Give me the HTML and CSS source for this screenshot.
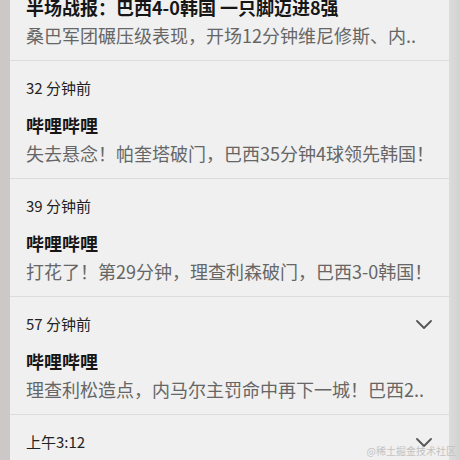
FILE: index.html
```html
<!DOCTYPE html>
<html lang="zh-CN">
<head>
    <meta charset="UTF-8">
    <meta name="viewport" content="width=device-width, initial-scale=1.0">
    <title>通知</title>
    <link rel="stylesheet" href="styles.css">
</head>
<body>
    <div class="screen">
        <div class="edge-left"></div>
        <main class="panel">
            <div class="notice-list">
                <div class="notice first">
                    <div class="notice-title">半场战报：巴西4-0韩国 一只脚迈进8强</div>
                    <div class="notice-body">桑巴军团碾压级表现，开场12分钟维尼修斯、内..</div>
                </div>
                <div class="notice">
                    <div class="notice-time">32 分钟前</div>
                    <div class="notice-title">哔哩哔哩</div>
                    <div class="notice-body">失去悬念！帕奎塔破门，巴西35分钟4球领先韩国！</div>
                </div>
                <div class="notice">
                    <div class="notice-time">39 分钟前</div>
                    <div class="notice-title">哔哩哔哩</div>
                    <div class="notice-body">打花了！第29分钟，理查利森破门，巴西3-0韩国！</div>
                </div>
                <div class="notice">
                    <div class="notice-time">57 分钟前
                        <svg class="chevron" width="16" height="9" viewBox="0 0 16 9"><polyline points="1,1 8,8 15,1"/></svg>
                    </div>
                    <div class="notice-title">哔哩哔哩</div>
                    <div class="notice-body">理查利松造点，内马尔主罚命中再下一城！巴西2..</div>
                </div>
                <div class="notice">
                    <div class="notice-time">上午3:12
                        <svg class="chevron" width="16" height="9" viewBox="0 0 16 9"><polyline points="1,1 8,8 15,1"/></svg>
                    </div>
                </div>
            </div>
        </main>
        <div class="edge-right"></div>
    </div>
    <div class="watermark">@稀土掘金技术社区</div>
</body>
</html>
```

FILE: styles.css
```css
* {
    margin: 0;
    padding: 0;
    box-sizing: border-box;
}

body {
    width: 460px;
    height: 460px;
    overflow: hidden;
    background-color: #cdc9c9;
    font-family: "Noto Sans CJK SC", "Noto Sans", sans-serif;
    position: relative;
}

.screen {
    display: flex;
    height: 460px;
}

.edge-left {
    width: 10px;
    background-color: #ccc8c8;
}

.panel {
    flex: 1;
    background-color: #f0f0f0;
    overflow: hidden;
}

.edge-right {
    width: 11px;
    background: linear-gradient(to right, #dcdcdc, #d2d2d2);
}

.notice-list {
    margin-top: -8px;
}

.notice {
    padding: 16px 17px 12px 16px;
    border-bottom: 1px solid #dcdcdc;
}

.notice.first {
    padding-top: 2px;
}

.notice-time {
    display: flex;
    justify-content: space-between;
    align-items: center;
    font-size: 15px;
    line-height: 22px;
    color: #222;
}

.chevron {
    fill: none;
    stroke: #555;
    stroke-width: 1.8;
    stroke-linecap: round;
    stroke-linejoin: round;
}

.notice-title {
    margin-top: 13px;
    font-size: 18px;
    line-height: 26px;
    font-weight: bold;
    color: #161616;
    white-space: nowrap;
}

.notice.first .notice-title {
    margin-top: 0;
}

.notice-body {
    margin-top: 2px;
    font-size: 18px;
    line-height: 26px;
    color: #666;
    white-space: nowrap;
    overflow: hidden;
}

.watermark {
    position: absolute;
    right: 4px;
    bottom: 2px;
    font-size: 10px;
    line-height: 14px;
    color: #c2c2c2;
}
```
